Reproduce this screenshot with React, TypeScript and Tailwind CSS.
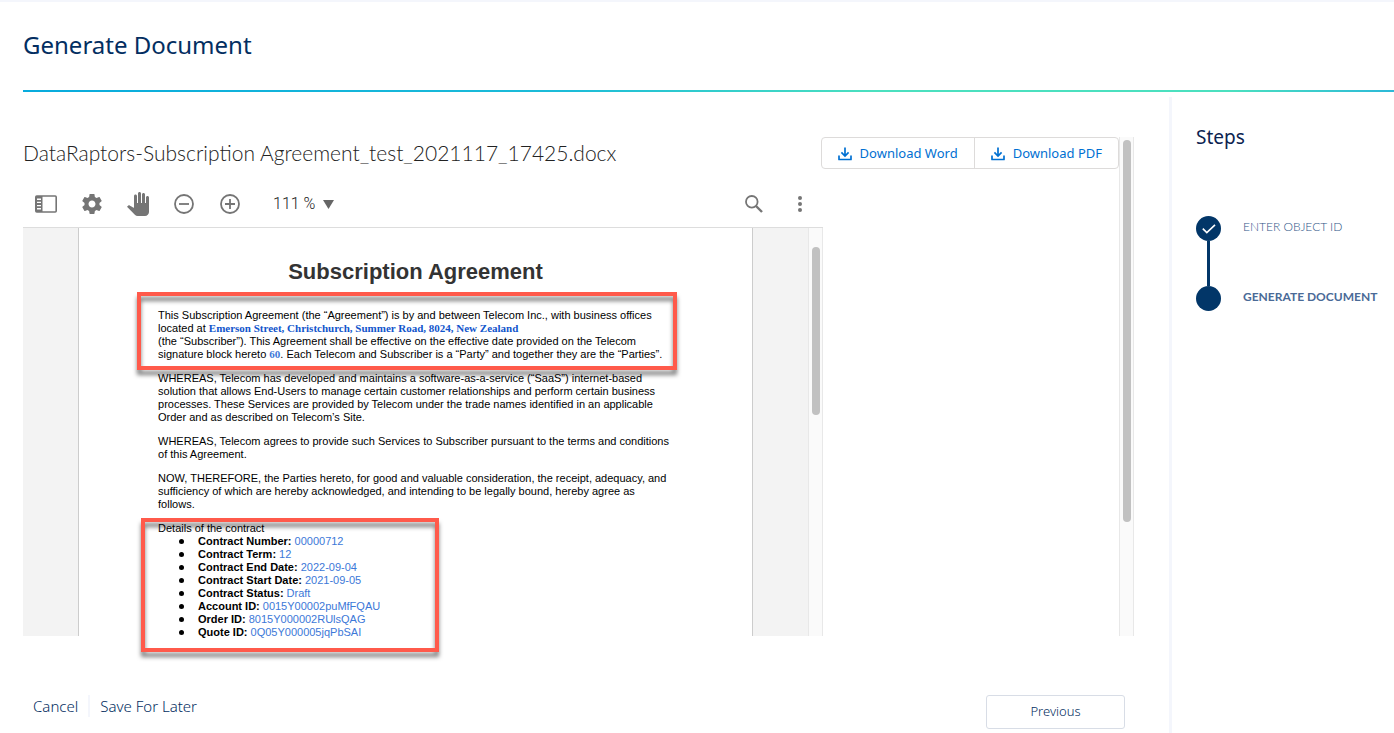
import React from "react";

const details = [
  { label: "Contract Number:", value: "00000712" },
  { label: "Contract Term:", value: "12" },
  { label: "Contract End Date:", value: "2022-09-04" },
  { label: "Contract Start Date:", value: "2021-09-05" },
  { label: "Contract Status:", value: "Draft" },
  { label: "Account ID:", value: "0015Y00002puMfFQAU" },
  { label: "Order ID:", value: "8015Y000002RUlsQAG" },
  { label: "Quote ID:", value: "0Q05Y000005jqPbSAI" },
];

function DownloadIcon() {
  return (
    <svg width="14" height="14" viewBox="0 0 14 14" fill="none" stroke="currentColor" strokeWidth="1.7" className="mt-[2px]">
      <path d="M7 0.5v8.2M3.4 5.4L7 9l3.6-3.6" />
      <path d="M1 9.2v3.3h12V9.2" strokeLinecap="round" strokeLinejoin="round" />
    </svg>
  );
}

function ToolButton({ label, children }: { label: string; children: React.ReactNode }) {
  return (
    <button aria-label={label} className="w-[46px] h-[46px] flex items-center justify-center text-[#757575]">
      {children}
    </button>
  );
}

function Toolbar() {
  return (
    <div className="h-[47px] flex items-center border-b border-[#dddddd]">
      <ToolButton label="Toggle sidebar">
        <svg width="22" height="18" viewBox="0 0 22 18" fill="none">
          <rect x="0.8" y="1" width="20.4" height="16" rx="1" stroke="currentColor" strokeWidth="1.6" />
          <rect x="1" y="1" width="6.5" height="16" fill="currentColor" />
          <path d="M2 4.2h4M2 7.4h4M2 10.6h4M2 13.8h4" stroke="#fff" strokeWidth="1.4" />
        </svg>
      </ToolButton>
      <ToolButton label="Settings">
        <svg width="24" height="24" viewBox="0 0 24 24" fill="currentColor">
          <path d="M19.43 12.98c.04-.32.07-.64.07-.98s-.03-.66-.07-.98l2.11-1.65c.19-.15.24-.42.12-.64l-2-3.46c-.12-.22-.39-.3-.61-.22l-2.49 1c-.52-.4-1.08-.73-1.69-.98l-.38-2.65C14.46 2.18 14.25 2 14 2h-4c-.25 0-.46.18-.49.42l-.38 2.65c-.61.25-1.17.59-1.69.98l-2.49-1c-.23-.09-.49 0-.61.22l-2 3.46c-.13.22-.07.49.12.64l2.11 1.65c-.04.32-.07.65-.07.98s.03.66.07.98l-2.11 1.65c-.19.15-.24.42-.12.64l2 3.46c.12.22.39.3.61.22l2.49-1c.52.4 1.08.73 1.69.98l.38 2.65c.03.24.24.42.49.42h4c.25 0 .46-.18.49-.42l.38-2.65c.61-.25 1.17-.59 1.69-.98l2.49 1c.23.09.49 0 .61-.22l2-3.46c.12-.22.07-.49-.12-.64l-2.11-1.65zM12 15.5c-1.93 0-3.5-1.57-3.5-3.5s1.57-3.5 3.5-3.5 3.5 1.57 3.500 3.500-1.57 3.500-3.500 3.500z" />
        </svg>
      </ToolButton>
      <ToolButton label="Pan">
        <svg width="24" height="24" viewBox="0 0 24 24" fill="currentColor">
          <path d="M23 5.5V20c0 2.2-1.8 4-4 4h-7.3c-1.08 0-2.1-.43-2.85-1.19L1 14.83s1.26-1.23 1.3-1.25c.22-.19.49-.29.79-.29.22 0 .42.06.6.16.04.01 4.31 2.46 4.31 2.46V4c0-.83.67-1.5 1.5-1.5S11 3.17 11 4v7h1V1.5c0-.83.67-1.5 1.5-1.5S15 .67 15 1.5V11h1V2.5c0-.83.67-1.5 1.5-1.5s1.5.67 1.5 1.5V11h1V5.5c0-.83.67-1.5 1.5-1.5s1.5.67 1.5 1.5z" />
        </svg>
      </ToolButton>
      <ToolButton label="Zoom out">
        <svg width="20" height="20" viewBox="0 0 20 20" fill="none" stroke="currentColor" strokeWidth="1.8">
          <circle cx="10" cy="10" r="9" />
          <path d="M5 10h10" />
        </svg>
      </ToolButton>
      <ToolButton label="Zoom in">
        <svg width="20" height="20" viewBox="0 0 20 20" fill="none" stroke="currentColor" strokeWidth="1.8">
          <circle cx="10" cy="10" r="9" />
          <path d="M5 10h10M10 5v10" />
        </svg>
      </ToolButton>
      <label className="ml-5 flex items-center gap-[7px]">
        <select aria-label="Zoom level" className="appearance-none bg-transparent font-['Roboto',sans-serif] text-base leading-6 font-light text-[#222222]">
          <option>111 %</option>
        </select>
        <svg width="11" height="9" viewBox="0 0 11 9" fill="#666666">
          <path d="M0 0h11L5.5 9z" />
        </svg>
      </label>
      <div className="ml-auto flex">
        <ToolButton label="Search">
          <svg width="18" height="18" viewBox="0 0 18 18" fill="none" stroke="currentColor" strokeWidth="1.8">
            <circle cx="6.8" cy="6.8" r="5.800" />
            <path d="M11 11L17 17" strokeWidth="2.4" />
          </svg>
        </ToolButton>
        <ToolButton label="More options">
          <svg width="4" height="16" viewBox="0 0 4 16" fill="currentColor">
            <circle cx="2" cy="2" r="2" />
            <circle cx="2" cy="8" r="2" />
            <circle cx="2" cy="14" r="2" />
          </svg>
        </ToolButton>
      </div>
    </div>
  );
}

function Agreement() {
  return (
    <article className="w-[675px] h-full shrink-0 pt-[30px] px-[79px] bg-white border-x border-[#cccccc] font-['Liberation_Sans',sans-serif] text-[11px] leading-[13px] text-black whitespace-nowrap">
      <h2 className="text-center text-[22px] leading-7 font-bold text-[#333333]">Subscription Agreement</h2>
      <div className="mt-[23px] flex flex-col gap-[11px]">
        <div className="relative">
          <p>
            This Subscription Agreement (the “Agreement”) is by and between Telecom Inc., with business offices
            <br />
            located at{" "}
            <b className="font-['Liberation_Serif',serif] text-[#1155cc]">
              Emerson Street, Christchurch, Summer Road, 8024, New Zealand
            </b>
            <br />
            (the “Subscriber”). This Agreement shall be effective on the effective date provided on the Telecom
            <br />
            signature block hereto <b className="font-['Liberation_Serif',serif] text-[#3c78d8]">60</b>. Each Telecom and
            Subscriber is a “Party” and together they are the “Parties”.
          </p>
          <div className="absolute -top-[17px] -bottom-[9px] -left-[21px] -right-1 border-4 border-[#ff5a4b] drop-shadow-[0_5px_2px_rgba(0,0,0,0.5)]" />
        </div>
        <p>
          WHEREAS, Telecom has developed and maintains a software-as-a-service (“SaaS”) internet-based
          <br />
          solution that allows End-Users to manage certain customer relationships and perform certain business
          <br />
          processes. These Services are provided by Telecom under the trade names identified in an applicable
          <br />
          Order and as described on Telecom’s Site.
        </p>
        <p>
          WHEREAS, Telecom agrees to provide such Services to Subscriber pursuant to the terms and conditions
          <br />
          of this Agreement.
        </p>
        <p>
          NOW, THEREFORE, the Parties hereto, for good and valuable consideration, the receipt, adequacy, and
          <br />
          sufficiency of which are hereby acknowledged, and intending to be legally bound, hereby agree as
          <br />
          follows.
        </p>
        <div className="relative">
          <p>Details of the contract</p>
          <ul>
            {details.map((d) => (
              <li key={d.label} className="flex items-center pl-[21px]">
                <span className="w-[5px] h-[5px] mr-[14px] rounded-full bg-black" />
                <b className="mr-[3px]">{d.label}</b>
                <span className="text-[#3c78d8]">{d.value}</span>
              </li>
            ))}
          </ul>
          <div className="absolute -top-1 -bottom-[13px] -left-[17px] w-[298px] border-4 border-[#ff5a4b] drop-shadow-[0_5px_2px_rgba(0,0,0,0.5)]" />
        </div>
      </div>
    </article>
  );
}

function Viewer() {
  return (
    <div className="w-[73%] mt-3">
      <Toolbar />
      <div className="h-[408px] flex">
        <div className="flex-1 flex justify-center bg-[#f3f3f3]">
          <Agreement />
        </div>
        <div className="w-[15px] pt-[19px] flex justify-center bg-[#fafafa] border-x border-[#e8e8e8]">
          <div className="w-2 h-[168px] rounded-full bg-[#c1c1c1]" />
        </div>
      </div>
    </div>
  );
}

function Steps() {
  return (
    <aside className="w-[225px] pt-[26px] pl-6 border-l-3 border-[#f4f6fc]">
      <h2 className="text-[19px] leading-7 text-[#0b2350]">Steps</h2>
      <ol className="mt-[65px] font-['Lato',sans-serif] text-xs">
        <li className="flex gap-[22px]">
          <div className="flex flex-col items-center">
            <span className="w-[25px] h-[25px] flex items-center justify-center rounded-full bg-[#023668]">
              <svg width="14" height="10" viewBox="0 0 14 10" fill="none" stroke="#fff" strokeWidth="1.6">
                <path d="M0.8 4.6L4.8 8.6L13 0.8" />
              </svg>
            </span>
            <span className="w-[3px] h-[45px] bg-[#023668]" />
          </div>
          <span className="leading-[22px] font-light text-[#2f5587]">ENTER OBJECT ID</span>
        </li>
        <li className="flex gap-[22px]">
          <span className="w-[25px] h-[25px] rounded-full bg-[#023668]" />
          <span className="leading-[22px] font-bold text-[#4a6a97]">GENERATE DOCUMENT</span>
        </li>
      </ol>
    </aside>
  );
}

export default function App() {
  return (
    <div className="min-h-screen flex flex-col bg-white border-t-2 border-[#f4f6fc] font-['Noto_Sans',sans-serif]">
      <header className="pl-[23px]">
        <h1 className="pt-[27px] pb-[29px] text-2xl leading-8 text-[#032e61]">Generate Document</h1>
        <div className="h-[2px] bg-[linear-gradient(90deg,#08abdd_0%,#1cbcd8_40%,#4be0bf_62%,#4be0bf_88%,#2cb9d8_100%)]" />
      </header>
      <div className="mt-[5px] flex-1 flex">
        <main className="flex-1 pt-10 pl-[23px] pr-[35px]">
          <div className="flex">
            <div className="flex-1">
              <div className="h-8 flex items-center justify-between">
                <h2 className="font-['Lato',sans-serif] text-[21px] leading-8 font-light text-[#222222]">
                  DataRaptors-Subscription Agreement_test_2021117_17425.docx
                </h2>
                <div className="h-8 flex border border-[#dddbda] rounded text-[13px] leading-5 text-[#0070d2]">
                  <button className="px-4 pb-px flex items-center gap-2 border-r border-[#dddbda]">
                    <DownloadIcon />
                    Download Word
                  </button>
                  <button className="px-4 pb-px flex items-center gap-2">
                    <DownloadIcon />
                    Download PDF
                  </button>
                </div>
              </div>
              <Viewer />
            </div>
            <div className="w-[15px] pt-[3px] flex justify-center bg-[#fafafa] border-x border-[#e8e8e8]">
              <div className="w-2 h-[382px] rounded-full bg-[#c1c1c1]" />
            </div>
          </div>
          <div className="mt-[59px] pl-[10px] pr-[9px] flex items-start justify-between">
            <div className="flex text-[15px] leading-[22px] font-light text-[#032e61]">
              <button className="pr-[10px] border-r-2 border-[#f4f6fc]">Cancel</button>
              <button className="pl-[10px]">Save For Later</button>
            </div>
            <button className="w-[139px] h-[34px] border border-[#d8dde6] rounded-[3px] text-[13px] font-light text-[#032e61]">
              Previous
            </button>
          </div>
        </main>
        <Steps />
      </div>
    </div>
  );
}
